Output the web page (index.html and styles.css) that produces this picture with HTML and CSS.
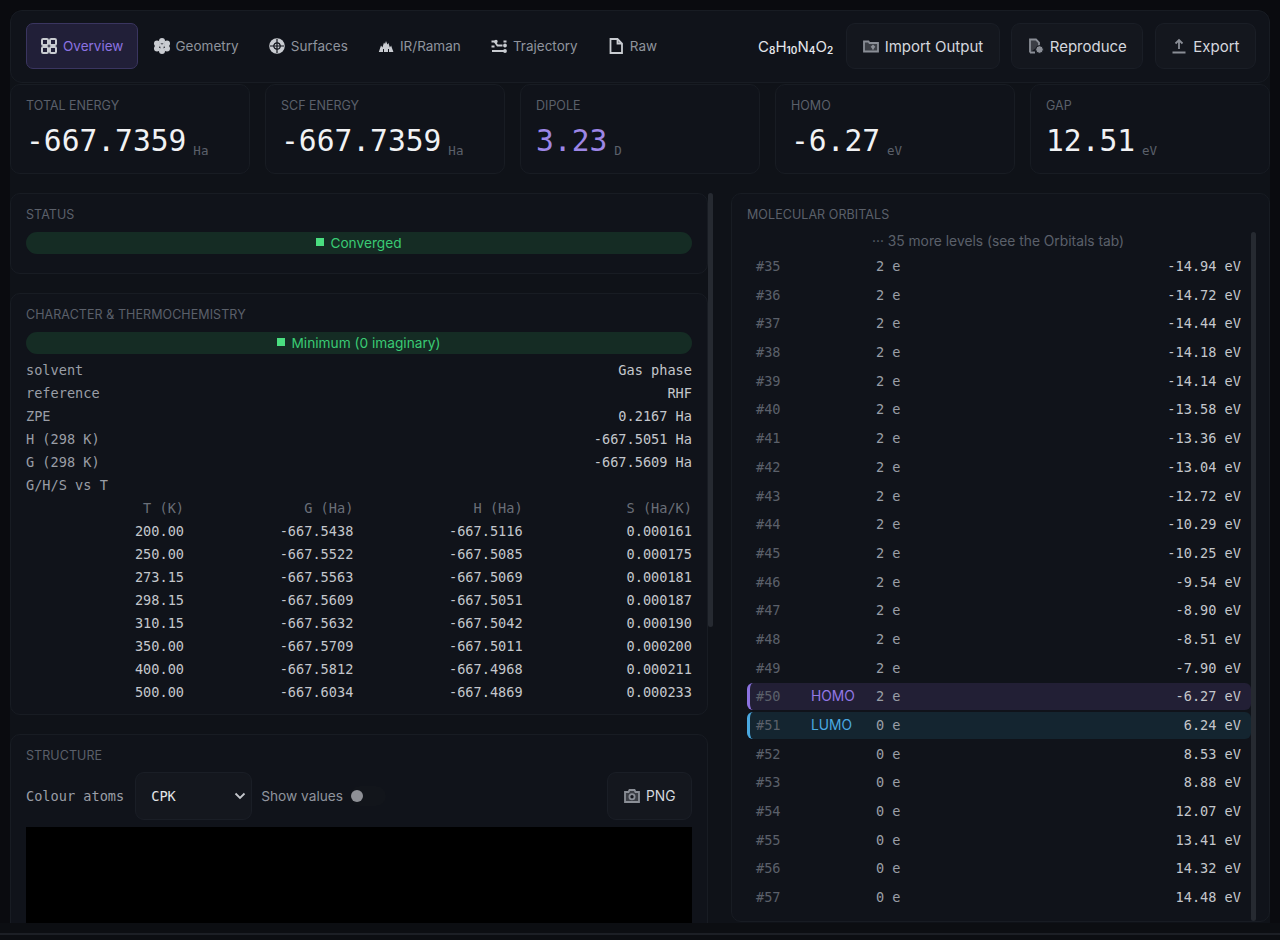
FILE: index.html
```html
<!DOCTYPE html>
<html lang="en">
<head>
<meta charset="utf-8">
<title>Overview</title>
<link rel="stylesheet" href="styles.css">
</head>
<body>
<div class="app">
  <header class="topbar">
    <nav class="tabs">
      <a class="tab active"><svg class="ico grid" viewBox="0 0 16 16"><rect x="1" y="1" width="6" height="6" rx="1.2"/><rect x="9" y="1" width="6" height="6" rx="1.2"/><rect x="1" y="9" width="6" height="6" rx="1.2"/><rect x="9" y="9" width="6" height="6" rx="1.2"/></svg>Overview</a>
      <a class="tab"><svg class="ico fill geo" viewBox="0 0 16 16"><circle cx="8" cy="3" r="3"/><circle cx="8" cy="13" r="3"/><circle cx="3" cy="5.500" r="3"/><circle cx="13" cy="5.500" r="3"/><circle cx="3" cy="10.500" r="3"/><circle cx="13" cy="10.500" r="3"/><circle cx="8" cy="8" r="3"/><circle cx="8" cy="5.800" r=".7" class="hole"/><circle cx="5.800" cy="9.200" r=".7" class="hole"/><circle cx="10.200" cy="9.200" r=".7" class="hole"/></svg>Geometry</a>
      <a class="tab"><svg class="ico globe" viewBox="0 0 16 16"><circle cx="8" cy="8" r="7.8" class="disc"/><circle cx="8" cy="8" r="3.2"/><path d="M1 8h14M8 1v14"/></svg>Surfaces</a>
      <a class="tab"><svg class="ico fill" viewBox="0 0 16 16"><path d="M.8 14L3 7.500l1.400 2L6 4.500l1 1.500 1-3 1.400 3.500 1-1.500 1.500 4.500 1.200-2L15.400 14z"/><path class="cut" d="M5.500 14v-3M10.500 14v-3"/></svg>IR/Raman</a>
      <a class="tab"><svg class="ico" viewBox="0 0 16 16"><path d="M.5 3.500h3l3 4h5M.5 8.500h3M1 13h12M12.500 3.500h3"/><circle cx="5" cy="3.500" r=".8"/><circle cx="14" cy="7.500" r="1"/><circle cx="14" cy="13" r="1"/></svg>Trajectory</a>
      <a class="tab"><svg class="ico" viewBox="0 0 16 16"><path d="M2.500 1h7L14 5.500V15H2.500zM9.500 1v4.500H14"/></svg>Raw</a>
    </nav>
    <div class="actions">
      <span class="formula">C<sub>8</sub>H<sub>10</sub>N<sub>4</sub>O<sub>2</sub></span>
      <button class="btn"><svg class="ico muted tinted" viewBox="0 0 16 16"><path d="M1 13.500V3.500h4.500l1 1.500H15v8.500zM10 11.500V8M8.300 9.500L10 7.800l1.700 1.700"/></svg>Import Output</button>
      <button class="btn"><svg class="ico muted tinted" viewBox="0 0 16 16"><path d="M2 14.500V1.500h6l3 3v3"/><path d="M2 14.500h5"/><circle cx="11.500" cy="11.500" r="3.800" class="solid"/></svg>Reproduce</button>
      <button class="btn"><svg class="ico muted" viewBox="0 0 16 16"><path d="M8 11V2M4.500 5.500L8 2l3.500 3.500M1.500 14.500h13"/></svg>Export</button>
    </div>
  </header>

  <section class="kpis">
    <div class="kpi"><div class="label">TOTAL ENERGY</div><div class="value">-667.7359<span class="unit">Ha</span></div></div>
    <div class="kpi"><div class="label">SCF ENERGY</div><div class="value">-667.7359<span class="unit">Ha</span></div></div>
    <div class="kpi"><div class="label">DIPOLE</div><div class="value accent">3.23<span class="unit">D</span></div></div>
    <div class="kpi"><div class="label">HOMO</div><div class="value">-6.27<span class="unit">eV</span></div></div>
    <div class="kpi"><div class="label">GAP</div><div class="value">12.51<span class="unit">eV</span></div></div>
  </section>

  <main class="main">
    <div class="left">
      <div class="thumb left-thumb"></div>
      <section class="panel status-panel">
        <h2 class="title">STATUS</h2>
        <div class="pill"><i class="sq"></i>Converged</div>
      </section>
      <section class="panel char-panel">
        <h2 class="title">CHARACTER &amp; THERMOCHEMISTRY</h2>
        <div class="pill"><i class="sq"></i>Minimum (0 imaginary)</div>
        <div class="kv"><span>solvent</span><b>Gas phase</b></div>
        <div class="kv"><span>reference</span><b>RHF</b></div>
        <div class="kv"><span>ZPE</span><b>0.2167 Ha</b></div>
        <div class="kv"><span>H (298 K)</span><b>-667.5051 Ha</b></div>
        <div class="kv"><span>G (298 K)</span><b>-667.5609 Ha</b></div>
        <div class="kv"><span>G/H/S vs T</span></div>
        <table class="thermo">
          <thead><tr><th>T (K)</th><th>G (Ha)</th><th>H (Ha)</th><th>S (Ha/K)</th></tr></thead>
          <tbody>
            <tr><td>200.00</td><td>-667.5438</td><td>-667.5116</td><td>0.000161</td></tr>
            <tr><td>250.00</td><td>-667.5522</td><td>-667.5085</td><td>0.000175</td></tr>
            <tr><td>273.15</td><td>-667.5563</td><td>-667.5069</td><td>0.000181</td></tr>
            <tr><td>298.15</td><td>-667.5609</td><td>-667.5051</td><td>0.000187</td></tr>
            <tr><td>310.15</td><td>-667.5632</td><td>-667.5042</td><td>0.000190</td></tr>
            <tr><td>350.00</td><td>-667.5709</td><td>-667.5011</td><td>0.000200</td></tr>
            <tr><td>400.00</td><td>-667.5812</td><td>-667.4968</td><td>0.000211</td></tr>
            <tr><td>500.00</td><td>-667.6034</td><td>-667.4869</td><td>0.000233</td></tr>
          </tbody>
        </table>
      </section>
      <section class="panel structure-panel">
        <h2 class="title">STRUCTURE</h2>
        <div class="controls">
          <span class="mono-label">Colour atoms</span>
          <div class="select">CPK<svg class="chev" viewBox="0 0 12 8"><path d="M1.500 1.500L6 6l4.500-4.500"/></svg></div>
          <span class="show">Show values</span>
          <span class="toggle"><i></i></span>
          <button class="btn png"><svg class="ico muted tinted" viewBox="0 0 16 16"><path d="M1 4h3.500l1-2h5l1 2H15v10H1z"/><circle cx="8" cy="8.800" r="2.600" class="lens"/></svg>PNG</button>
        </div>
        <div class="canvas"></div>
      </section>
    </div>

    <section class="panel orbitals">
      <h2 class="title">MOLECULAR ORBITALS</h2>
      <div class="more">··· 35 more levels (see the Orbitals tab)</div>
      <div class="thumb right-thumb"></div>
      <div class="orb"><span>#35</span><em></em><b>2 e</b><u>-14.94 eV</u></div>
      <div class="orb"><span>#36</span><em></em><b>2 e</b><u>-14.72 eV</u></div>
      <div class="orb"><span>#37</span><em></em><b>2 e</b><u>-14.44 eV</u></div>
      <div class="orb"><span>#38</span><em></em><b>2 e</b><u>-14.18 eV</u></div>
      <div class="orb"><span>#39</span><em></em><b>2 e</b><u>-14.14 eV</u></div>
      <div class="orb"><span>#40</span><em></em><b>2 e</b><u>-13.58 eV</u></div>
      <div class="orb"><span>#41</span><em></em><b>2 e</b><u>-13.36 eV</u></div>
      <div class="orb"><span>#42</span><em></em><b>2 e</b><u>-13.04 eV</u></div>
      <div class="orb"><span>#43</span><em></em><b>2 e</b><u>-12.72 eV</u></div>
      <div class="orb"><span>#44</span><em></em><b>2 e</b><u>-10.29 eV</u></div>
      <div class="orb"><span>#45</span><em></em><b>2 e</b><u>-10.25 eV</u></div>
      <div class="orb"><span>#46</span><em></em><b>2 e</b><u>-9.54 eV</u></div>
      <div class="orb"><span>#47</span><em></em><b>2 e</b><u>-8.90 eV</u></div>
      <div class="orb"><span>#48</span><em></em><b>2 e</b><u>-8.51 eV</u></div>
      <div class="orb"><span>#49</span><em></em><b>2 e</b><u>-7.90 eV</u></div>
      <div class="orb homo"><span>#50</span><em>HOMO</em><b>2 e</b><u>-6.27 eV</u></div>
      <div class="orb lumo"><span>#51</span><em>LUMO</em><b>0 e</b><u>6.24 eV</u></div>
      <div class="orb"><span>#52</span><em></em><b>0 e</b><u>8.53 eV</u></div>
      <div class="orb"><span>#53</span><em></em><b>0 e</b><u>8.88 eV</u></div>
      <div class="orb"><span>#54</span><em></em><b>0 e</b><u>12.07 eV</u></div>
      <div class="orb"><span>#55</span><em></em><b>0 e</b><u>13.41 eV</u></div>
      <div class="orb"><span>#56</span><em></em><b>0 e</b><u>14.32 eV</u></div>
      <div class="orb"><span>#57</span><em></em><b>0 e</b><u>14.48 eV</u></div>
    </section>
  </main>
</div>
<footer class="footer"></footer>
</body>
</html>
```
FILE: styles.css
```css
* { box-sizing: border-box; }
html, body { margin: 0; height: 940px; overflow: hidden; }
body {
  background: #0a0b0f;
  color: #d5d8de;
  font-family: Inter, "Noto Sans", sans-serif;
  display: flex;
  flex-direction: column;
}
.app {
  height: 913px;
  margin: 10px 10px 0;
  display: flex;
  flex-direction: column;
  flex: none;
  background: #0f1218;
  overflow: hidden;
  border-radius: 12px 12px 0 0;
}
.footer {
  flex: 1;
  background: #0c0e12;
  padding-top: 10px;
}
.footer::after {
  content: "";
  display: block;
  height: 2px;
  background: #1c1f25;
}
.topbar {
  height: 73px;
  flex: none;
  margin-bottom: 1px;
  border: 1px solid #181c23;
  border-radius: 12px;
  background: #10131a;
  padding: 12px 13px 0 15px;
  display: flex;
  align-items: flex-start;
  justify-content: space-between;
}
.tabs { display: flex; align-items: center; gap: 0.2px; }
.tab {
  height: 46px;
  padding: 0 14px;
  border: 1px solid transparent;
  border-radius: 7px;
  display: flex;
  align-items: center;
  gap: 6px;
  font-size: 13.5px;
  color: #8f949d;
}
.tab.active {
  background: #211f38;
  border-color: #3a3560;
  color: #8b72e0;
}
.ico {
  width: 16px;
  height: 16px;
  flex: none;
  fill: none;
  stroke: #c9ccd1;
  stroke-width: 1.8;
}
.ico.grid { stroke-width: 2; }
.ico.fill { fill: #c9ccd1; stroke: none; }
.ico.geo { overflow: visible; }
.ico .hole { fill: #10131a; }
.ico .cut { fill: none; stroke: #10131a; stroke-width: 1; }
.ico.globe { stroke: #10131a; stroke-width: 1.2; }
.ico.globe .disc { fill: #c9ccd1; stroke: none; }
.ico.muted { stroke: #8a8e96; }
.ico.tinted { fill: #3b3e45; }
.ico .solid { fill: #8a8e96; stroke: #14171e; stroke-width: 1; }
.ico .lens { fill: #14171e; }
.actions { display: flex; align-items: center; height: 46px; }
.formula { font-size: 15px; color: #e4e6ea; margin-right: 13px; }
.formula sub { font-size: 10px; vertical-align: -2px; line-height: 0; font-weight: 600; }
.btn {
  height: 46px;
  padding: 0 15.5px;
  background: #14171e;
  border: 1px solid #1a1e26;
  border-radius: 9px;
  color: #d5d8de;
  font: 15px Inter, sans-serif;
  display: flex;
  align-items: center;
  gap: 6px;
}
.btn + .btn { margin-left: 11.5px; }
.kpis {
  display: grid;
  grid-template-columns: repeat(5, 240px);
  gap: 15px;
  flex: none;
  height: 90px;
}
.kpi {
  border: 1px solid #181c23;
  border-radius: 10px;
  background: #10131a;
  padding: 13px 15px 0;
}
.label { font-size: 12.5px; color: #5b606a; line-height: 16px; }
.value {
  font-family: "DejaVu Sans Mono", monospace;
  font-size: 29.6px;
  color: #f1f2f4;
  line-height: 36px;
  margin-top: 9px;
  white-space: nowrap;
}
.value.accent { color: #9d86e6; }
.unit { font-size: 12.5px; color: #5b606a; margin-left: 7px; vertical-align: -4px; }
.main {
  display: grid;
  grid-template-columns: 703px 539px;
  column-gap: 18px;
  margin-top: 19px;
  flex: 1;
  min-height: 0;
}
.left { position: relative; overflow: hidden; }
.thumb { position: absolute; width: 5px; background: #262a31; border-radius: 3px; }
.left-thumb { left: 698px; top: 0; height: 434px; }
.panel {
  border: 1px solid #181c23;
  border-radius: 10px;
  background: #10131a;
  padding: 13px 15px 15px;
  width: 698px;
  margin-bottom: 19px;
}
.title {
  margin: 0;
  font-size: 12.5px;
  font-weight: 400;
  letter-spacing: 0.07px;
  color: #5b606a;
  line-height: 16px;
}
.pill {
  height: 22px;
  margin-top: 9px;
  border-radius: 11px;
  background: #152c24;
  color: #3aca74;
  font-size: 13.7px;
  display: flex;
  align-items: center;
  justify-content: center;
  gap: 6px;
}
.sq { width: 8px; height: 8px; margin-bottom: 2px; background: #4ade80; }
.status-panel { height: 81px; }
.char-panel { height: 422px; }
.char-panel .pill { margin-bottom: 5px; }
.kv {
  display: flex;
  justify-content: space-between;
  height: 23px;
  line-height: 23px;
  font-family: "DejaVu Sans Mono", monospace;
  font-size: 13.6px;
  color: #9a9ea6;
}
.kv b { font-weight: 400; color: #c4c7cc; }
.thermo {
  width: 100%;
  border-collapse: collapse;
  table-layout: fixed;
  font-family: "DejaVu Sans Mono", monospace;
  font-size: 13.6px;
  line-height: 23px;
}
.thermo th, .thermo td { padding: 0; height: 23px; text-align: right; font-weight: 400; vertical-align: top; }
.thermo th { color: #6a6f78; }
.thermo td { color: #c4c7cc; }
.thermo th:first-child { width: 158px; }
.structure-panel { margin-bottom: 0; height: 250px; }
.controls { display: flex; align-items: center; margin-top: 8px; height: 48px; }
.mono-label { font-family: "DejaVu Sans Mono", monospace; font-size: 13.6px; color: #9a9ea6; }
.select {
  width: 117px;
  height: 48px;
  margin-left: 11px;
  border: 1px solid #1a1e26;
  border-radius: 9px;
  background: #14171e;
  padding: 0 5px 0 15px;
  display: flex;
  align-items: center;
  justify-content: space-between;
  font-family: "DejaVu Sans Mono", monospace;
  font-size: 13.6px;
  color: #e4e6ea;
}
.chev { width: 12px; height: 8px; fill: none; stroke: #c4c7cc; stroke-width: 1.8; }
.show { margin-left: 9px; font-size: 13.7px; color: #8f949d; }
.toggle {
  width: 36px;
  height: 20px;
  margin-left: 7px;
  border-radius: 10px;
  background: #12151b;
  display: flex;
  align-items: center;
  padding-left: 1px;
}
.toggle i { width: 12px; height: 12px; border-radius: 50%; background: #8e9096; }
.btn.png { margin-left: auto; height: 48px; font-size: 13.8px; padding: 0 15.5px; }
.canvas { height: 110px; margin-top: 7px; background: #000; }
.orbitals {
  position: relative;
  width: 539px;
  margin: 0 0 1px;
  overflow: hidden;
  padding: 13px 15px 0;
}
.more { text-align: center; font-size: 13.8px; color: #5b606a; line-height: 20px; margin-top: 8px; margin-bottom: 2px; padding-right: 5px; }
.right-thumb { right: 13px; top: 38px; bottom: 0; }
.orb {
  display: grid;
  grid-template-columns: 55px 65px 1fr auto;
  height: 26.7px;
  line-height: 26.7px;
  margin-bottom: 2px;
  width: 504px;
  padding: 0 10px 0 7px;
  font-family: "DejaVu Sans Mono", monospace;
  font-size: 13.6px;
  color: #c4c7cc;
  border-left: 2px solid transparent;
  border-radius: 6px;
}
.orb span { color: #5b606a; }
.orb em { font-style: normal; font-family: Inter, sans-serif; font-size: 13.8px; }
.orb b { font-weight: 400; color: #9a9ea6; }
.orb u { text-decoration: none; }
.orb.homo { background: #221f35; border-left: 3px solid #8b72e0; padding-left: 6px; }
.orb.homo em { color: #9378e6; }
.orb.lumo { background: #142530; border-left: 3px solid #4aa8e0; padding-left: 6px; }
.orb.lumo em { color: #4aa8e0; }
```
